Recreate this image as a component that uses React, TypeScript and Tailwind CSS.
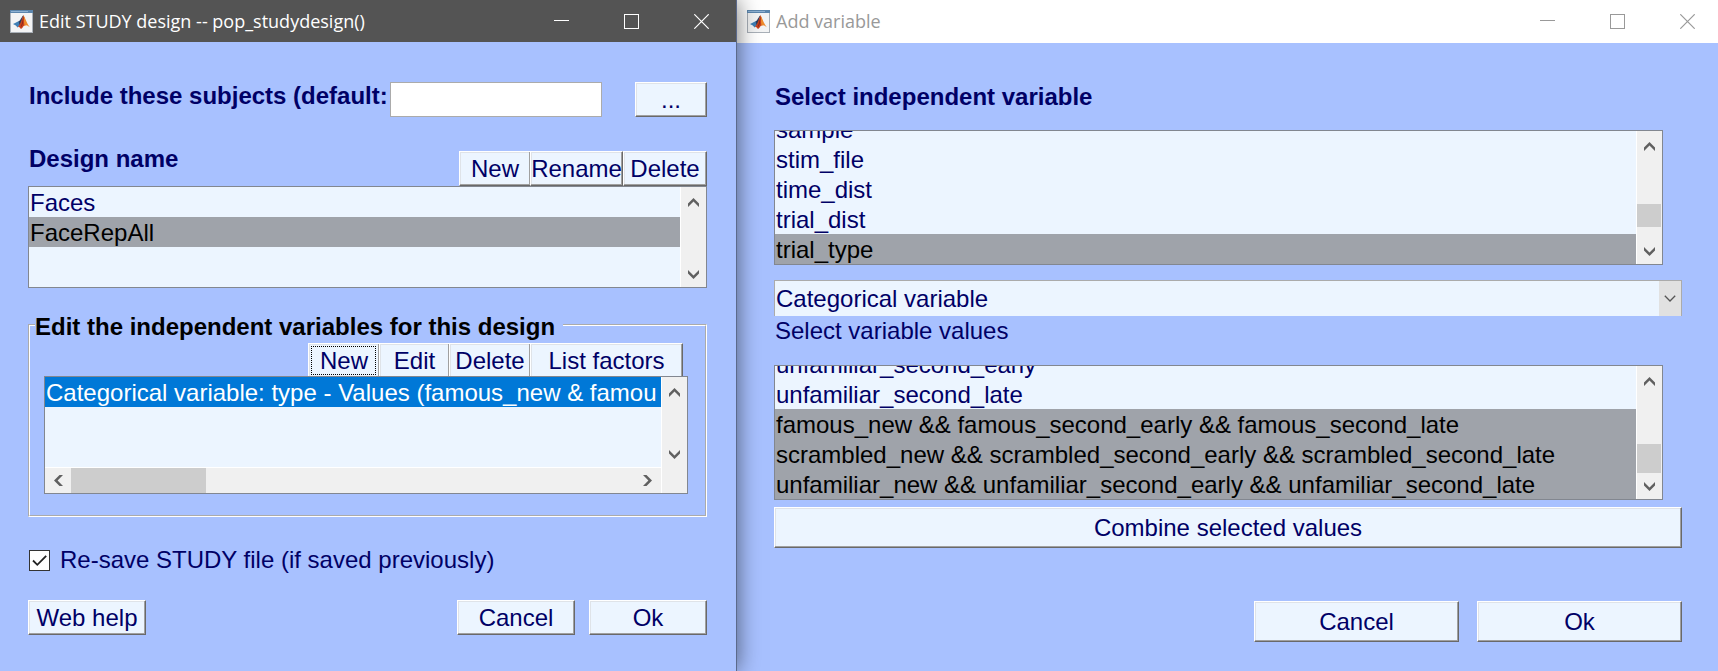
import { useLayoutEffect, useRef, useState } from "react";
import type { ReactNode } from "react";
import clsx from "clsx";

const bevel =
  "border border-t-white border-l-white border-r-[#696969] border-b-[#696969] shadow-[inset_-1px_-1px_0_#a0a0a0,inset_1px_1px_0_#dfe3e8] bg-[#ecf5ff]";

type PushButtonProps = {
  children: ReactNode;
  className?: string;
  focused?: boolean;
  label?: string;
};

function PushButton({ children, className, focused, label }: PushButtonProps) {
  return (
    <button
      type="button"
      aria-label={label}
      className={clsx(
        bevel,
        "flex shrink-0 items-center justify-center whitespace-nowrap leading-7",
        focused && "outline-1 -outline-offset-4 outline-dotted outline-black",
        className,
      )}
    >
      {children}
    </button>
  );
}

function MatlabIcon() {
  return (
    <svg viewBox="0 0 23 23" className="size-[23px] shrink-0" aria-hidden="true">
      <rect x="0.5" y="0.5" width="22" height="22" fill="#f3f4f5" stroke="#a9b0b8" />
      <rect x="0" y="0" width="23" height="3" fill="#5c86ad" />
      <rect x="1" y="1" width="17" height="1" fill="#8fb2d3" />
      <path d="M3 14 L8.5 11.2 L11 13.6 L7.6 17.4 L5.8 15.6 Z" fill="#3f7fb5" />
      <path d="M8.5 11.2 C10.4 10.8 11.3 7.2 13.4 5.2 L11.4 13 L9.6 15.2 Z" fill="#2b3f63" />
      <path d="M13.4 5.2 C11.9 8.6 11.4 12.6 7.6 17.4 C9.4 16.4 10.2 18 10.8 19 C12.6 18.6 13.4 15 15.4 15.2 L14.6 8 Z" fill="#c8401c" />
      <path d="M13.4 5.2 C15 7 16.4 13 19.8 17.2 C17.6 15.6 16 14.6 14.6 16 C13.6 12 14 8.6 13.4 5.2 Z" fill="#ee8a2c" />
      <path d="M13.4 5.2 C13 9.4 12.2 13.6 10.8 17 C12.6 15.6 13.6 11 13.4 5.2 Z" fill="#7b1f18" />
    </svg>
  );
}

type TitleBarProps = { title: string; active?: boolean };

function TitleBar({ title, active }: TitleBarProps) {
  return (
    <header
      className={clsx(
        "flex shrink-0 items-center pl-[10px]",
        active ? "h-[42px] bg-[#545454] text-white" : "h-[43px] bg-white text-[#999999]",
      )}
    >
      <MatlabIcon />
      <h1 className="ml-[6px] min-w-0 flex-1 truncate pb-px font-['Open_Sans','Noto_Sans',sans-serif] text-[18px] leading-7">
        {title}
      </h1>
      <button type="button" aria-label="Minimize" className="flex h-full w-[70px] shrink-0 items-center justify-center">
        <svg viewBox="0 0 15 15" className="size-[15px]" stroke="currentColor" fill="none">
          <path d="M0 6.5H15" />
        </svg>
      </button>
      <button type="button" aria-label="Maximize" className="flex h-full w-[70px] shrink-0 items-center justify-center">
        <svg viewBox="0 0 15 15" className="size-[15px]" stroke="currentColor" fill="none">
          <rect x="0.5" y="0.5" width="14" height="14" />
        </svg>
      </button>
      <button
        type="button"
        aria-label="Close"
        className={clsx("flex h-full w-[70px] shrink-0 items-center justify-center", !active && "-mr-1")}
      >
        <svg viewBox="0 0 15 15" className="size-[15px]" stroke="currentColor" strokeWidth="1.2" fill="none">
          <path d="M0.3 0.3L14.7 14.7M14.7 0.3L0.3 14.7" />
        </svg>
      </button>
    </header>
  );
}

const arrowTurn = { up: "", down: "rotate-180", left: "-rotate-90", right: "rotate-90" };

function ScrollArrow({ to, className, onClick }: { to: keyof typeof arrowTurn; className: string; onClick?: () => void }) {
  return (
    <button
      type="button"
      tabIndex={-1}
      aria-label={`Scroll ${to}`}
      onClick={onClick}
      className={clsx("flex shrink-0 items-center justify-center", className)}
    >
      <svg viewBox="0 0 11 9" className={clsx("h-[9px] w-[11px]", arrowTurn[to])} fill="#606060">
        <path d="M5.5 0L11 5.5V9L5.5 3.6L0 9V5.5Z" />
      </svg>
    </button>
  );
}

type ListBoxProps = {
  label: string;
  items: string[];
  initial: number[];
  focused?: boolean;
  thumb?: string;
  horizontal?: boolean;
  className: string;
};

function ListBox({ label, items, initial, focused, thumb, horizontal, className }: ListBoxProps) {
  const [selected, setSelected] = useState(initial);
  const list = useRef<HTMLUListElement>(null);
  const scroll = (dy: number) => list.current?.scrollBy(0, dy);

  useLayoutEffect(() => {
    if (list.current) list.current.scrollTop = list.current.scrollHeight;
  }, []);

  return (
    <div className={clsx("flex border border-[#828790] bg-[#ecf5ff]", className)}>
      <div className="flex min-w-0 flex-1 flex-col">
        <ul ref={list} role="listbox" aria-label={label} className="min-h-0 flex-1 overflow-hidden">
          {items.map((item, i) => {
            const on = selected.includes(i);
            return (
              <li
                key={item}
                role="option"
                aria-selected={on}
                onClick={() => setSelected([i])}
                className={clsx(
                  "h-[30px] overflow-hidden pl-px leading-8 whitespace-nowrap",
                  on && (focused ? "bg-[#0078d7] text-white" : "bg-[#9fa3aa] text-black"),
                )}
              >
                {item}
              </li>
            );
          })}
        </ul>
        {horizontal && (
          <div className="flex h-[26px] shrink-0 border-t border-white bg-[#f0f0f0]">
            <ScrollArrow to="left" className="w-[26px]" />
            <div className="w-[135px] bg-[#cdcdcd]" />
            <div className="flex-1" />
            <ScrollArrow to="right" className="w-[28px]" />
          </div>
        )}
      </div>
      <div
        className={clsx(
          "flex w-[26px] shrink-0 flex-col border-l border-white bg-[#f0f0f0]",
          horizontal && "pb-[26px]",
        )}
      >
        <ScrollArrow to="up" className="h-[30px]" onClick={() => scroll(-30)} />
        {thumb && <div className={clsx("mr-px bg-[#cdcdcd]", thumb)} />}
        <div className="flex-1" />
        <ScrollArrow to="down" className="h-[26px]" onClick={() => scroll(30)} />
      </div>
    </div>
  );
}

function StudyDesignWindow() {
  return (
    <section className="relative z-10 flex min-w-0 flex-[736] flex-col border-r border-[#5b6a8c] bg-[#a8c1ff] shadow-[0_0_22px_rgba(0,0,0,0.55)]">
      <TitleBar active title="Edit STUDY design -- pop_studydesign()" />
      <div className="flex flex-col pt-10 pr-[29px] pl-7">
        <div className="flex">
          <label htmlFor="subjects" className="min-w-0 flex-1 overflow-hidden pl-px font-bold whitespace-nowrap">
            Include these subjects (default:
          </label>
          <input
            id="subjects"
            type="text"
            className="h-[35px] w-[212px] shrink-0 border border-[#ababab] bg-white px-1"
          />
          <PushButton label="Choose subjects" className="ml-[33px] h-[35px] w-[72px]">
            ...
          </PushButton>
        </div>

        <div className="mt-7 flex items-end justify-between">
          <h2 className="self-start pl-px font-bold">Design name</h2>
          <div className="mt-[6px] flex">
            <PushButton className="h-[35px] w-[71px] border-r-0">New</PushButton>
            <PushButton className="h-[35px] w-[93px]">Rename</PushButton>
            <PushButton className="h-[35px] w-[84px]">Delete</PushButton>
          </div>
        </div>
        <ListBox label="Design name" items={["Faces", "FaceRepAll"]} initial={[1]} className="h-[102px]" />

        <fieldset className="mt-[23px] min-w-0 border-2 border-white pr-[17px] pb-[21px] pl-[14px] [border-style:groove]">
          <legend className="ml-[-9px] pt-1 pr-2 leading-6 font-bold text-black">
            Edit the independent variables for this design
          </legend>
          <div className="flex flex-col pt-1">
            <div className="mr-[5px] -mb-[2px] flex self-end">
              <PushButton focused className="h-[35px] w-[71px] border-r-0">
                New
              </PushButton>
              <PushButton className="h-[35px] w-[70px] border-r-0">Edit</PushButton>
              <PushButton className="h-[35px] w-[81px] border-r-0">Delete</PushButton>
              <PushButton className="h-[35px] w-[153px]">List factors</PushButton>
            </div>
            <ListBox
              label="Independent variables"
              items={["Categorical variable: type - Values (famous_new & famou"]}
              initial={[0]}
              focused
              horizontal
              className="h-[118px]"
            />
          </div>
        </fieldset>

        <label className="mt-[29px] flex items-center gap-[10px]">
          <span className="grid">
            <input
              type="checkbox"
              defaultChecked
              className="peer col-start-1 row-start-1 ml-px size-[21px] appearance-none border border-[#333333] bg-white"
            />
            <svg
              viewBox="0 0 21 21"
              className="pointer-events-none col-start-1 row-start-1 ml-px hidden size-[21px] peer-checked:block"
              fill="none"
              stroke="#222222"
              strokeWidth="1.8"
            >
              <path d="M4 10.5L8.3 14.8L17.2 5.8" />
            </svg>
          </span>
          Re-save STUDY file (if saved previously)
        </label>

        <div className="mt-[26px] flex gap-[14px] pb-[34px]">
          <PushButton className="mr-auto h-[35px] w-[118px]">Web help</PushButton>
          <PushButton className="h-[35px] w-[118px]">Cancel</PushButton>
          <PushButton className="h-[35px] w-[118px]">Ok</PushButton>
        </div>
      </div>
    </section>
  );
}

function AddVariableWindow() {
  return (
    <section className="flex min-w-0 flex-[981] flex-col bg-[#a8c1ff]">
      <TitleBar title="Add variable" />
      <div className="flex flex-col pt-10 pr-9 pl-[37px]">
        <h2 className="pl-px font-bold">Select independent variable</h2>
        <ListBox
          label="Select independent variable"
          items={["sample", "stim_file", "time_dist", "trial_dist", "trial_type"]}
          initial={[4]}
          thumb="mt-[43px] h-[23px]"
          className="mt-[19px] mr-[19px] h-[135px]"
        />

        <div className="mt-[15px] grid">
          <select
            aria-label="Variable type"
            className="col-start-1 row-start-1 h-9 w-full appearance-none border border-b-0 border-[#ababab] bg-[#ecf5ff] pl-px"
          >
            <option>Categorical variable</option>
            <option>Continuous variable</option>
          </select>
          <span className="pointer-events-none col-start-1 row-start-1 mt-px mr-px flex w-[22px] items-center justify-center justify-self-end bg-[#e1e1e1]">
            <svg viewBox="0 0 12 7" className="h-[7px] w-3" fill="none" stroke="#555555" strokeWidth="1.3">
              <path d="M0.8 0.8L6 6L11.2 0.8" />
            </svg>
          </span>
        </div>

        <h3 className="mt-px pl-px">Select variable values</h3>
        <ListBox
          label="Select variable values"
          items={[
            "unfamiliar_second_early",
            "unfamiliar_second_late",
            "famous_new && famous_second_early && famous_second_late",
            "scrambled_new && scrambled_second_early && scrambled_second_late",
            "unfamiliar_new && unfamiliar_second_early && unfamiliar_second_late",
          ]}
          initial={[2, 3, 4]}
          thumb="mt-[48px] h-[29px]"
          className="mt-5 mr-[19px] h-[135px]"
        />
        <PushButton className="mt-[7px] h-[41px]">Combine selected values</PushButton>

        <div className="mt-[53px] flex justify-end gap-[18px]">
          <PushButton className="h-[41px] w-[205px]">Cancel</PushButton>
          <PushButton className="h-[41px] w-[205px]">Ok</PushButton>
        </div>
      </div>
    </section>
  );
}

export default function App() {
  return (
    <main className="flex min-h-screen overflow-hidden bg-[#a8c1ff] font-['Liberation_Sans',Arial,sans-serif] text-[24px] leading-7 text-[#000066]">
      <StudyDesignWindow />
      <AddVariableWindow />
    </main>
  );
}
